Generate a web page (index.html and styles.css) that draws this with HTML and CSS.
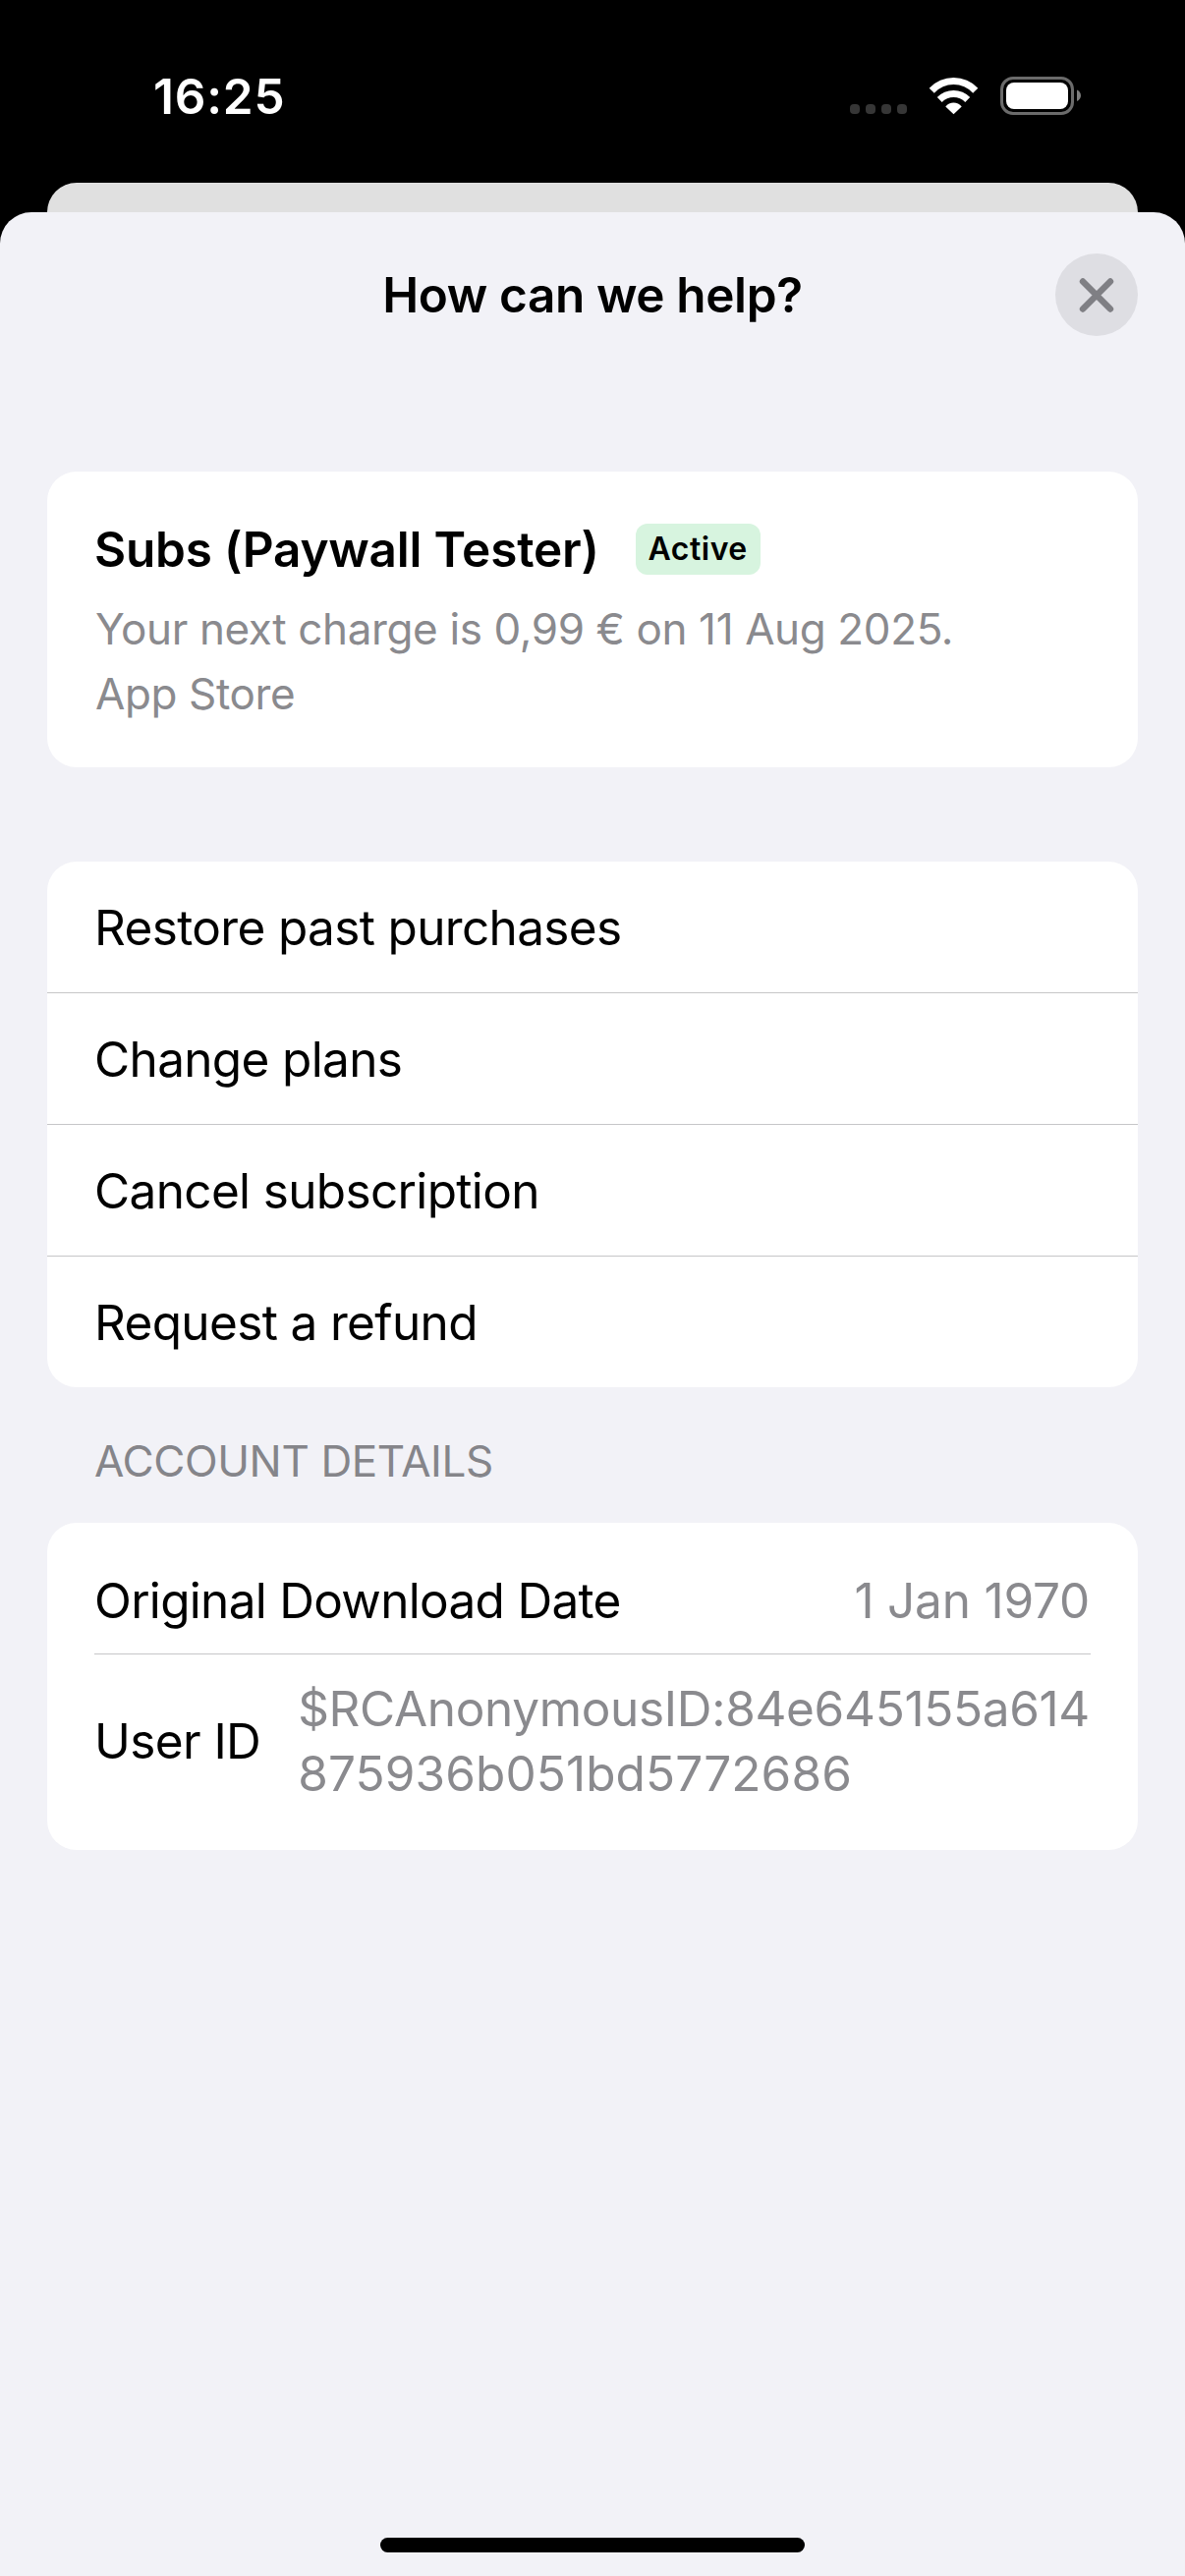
FILE: index.html
```html
<!DOCTYPE html>
<html lang="en">
<head>
<meta charset="utf-8">
<title>How can we help?</title>
<link rel="stylesheet" href="styles.css">
</head>
<body>
<div class="screen">
  <header class="status-bar">
    <div class="time">16:25</div>
    <div class="indicators">
      <div class="cellular"><i></i><i></i><i></i><i></i></div>
      <svg class="wifi" width="51" height="39" viewBox="0 0 51 39" fill="#fff">
        <path d="M.7 11.7A34.1 34.1 0 0 1 50.3 11.7L45.2 16.7A26.6 26.6 0 0 0 5.8 16.7Z"/>
        <path d="M8.8 21.1A23.2 23.2 0 0 1 42.2 21.1L37.3 26.1A16.2 16.2 0 0 0 13.7 26.1Z"/>
        <path d="M17.3 30.5A10.5 10.5 0 0 1 33.7 30.5L25.5 38.3Z"/>
      </svg>
      <svg class="battery" width="82" height="39" viewBox="0 0 82 39">
        <rect x="1.5" y="1.5" width="72" height="36" rx="11.5" fill="none" stroke="#6b6b6b" stroke-width="3"/>
        <rect x="6" y="6" width="63" height="27" rx="8" fill="#fff"/>
        <path d="M78 13.5Q82 15.5 82 19.3T78 25Z" fill="#7d7d7d"/>
      </svg>
    </div>
  </header>

  <div class="back-sheet"></div>

  <main class="sheet">
    <div class="nav">
      <h1 class="nav-title">How can we help?</h1>
      <button class="close" aria-label="Close">
        <svg width="36" height="36" viewBox="0 0 36 36" fill="none" stroke="#7f7f84" stroke-width="6.4" stroke-linecap="round"><path d="M4 4.5L32 32.5M32 4.5L4 32.5"/></svg>
      </button>
    </div>

    <section class="card subscription">
      <div class="subscription-head">
        <h2 class="product">Subs (Paywall Tester)</h2>
        <span class="badge">Active</span>
      </div>
      <p class="detail">Your next charge is 0,99 € on 11 Aug 2025.</p>
      <p class="detail">App Store</p>
    </section>

    <ul class="card actions">
      <li class="action">Restore past purchases</li>
      <li class="action">Change plans</li>
      <li class="action">Cancel subscription</li>
      <li class="action">Request a refund</li>
    </ul>

    <h3 class="section-title">ACCOUNT DETAILS</h3>

    <section class="card account">
      <div class="row">
        <span class="label label-date">Original Download Date</span>
        <span class="value value-date">1 Jan 1970</span>
      </div>
      <div class="row row-id">
        <span class="label">User ID</span>
        <span class="value value-id">$RCAnonymousID:84e645155a614<br><span class="digits">875936b051bd5772686</span></span>
      </div>
    </section>

    <div class="home-indicator"></div>
  </main>
</div>
</body>
</html>
```
FILE: styles.css
```css
* { box-sizing: border-box; margin: 0; padding: 0; }

body {
  background: #000;
  color: #000;
  font-family: Inter, "Liberation Sans", sans-serif;
  font-size: 49.5px;
  line-height: 66px;
  white-space: nowrap;
}

.screen {
  display: flex;
  flex-direction: column;
  width: 1206px;
  height: 2622px;
  overflow: hidden;
}

/* Status bar */
.status-bar {
  display: flex;
  justify-content: space-between;
  align-items: flex-start;
  height: 186px;
  padding: 78px 106px 0 156px;
  color: #fff;
}
.time { font-weight: 600; line-height: 40px; letter-spacing: .8px; }
.indicators { display: flex; align-items: flex-end; gap: 22px; }
.indicators svg { display: block; }
.cellular { display: flex; gap: 6px; padding-bottom: 1px; }
.cellular i { width: 10px; height: 10px; border-radius: 4px; background: #363636; }

/* Sheets */
.back-sheet {
  height: 30px;
  margin: 0 48px;
  border-radius: 30px 30px 0 0;
  background: #e0e0e0;
}
.sheet {
  display: flex;
  flex-direction: column;
  flex: 1;
  padding: 0 48px 24px;
  border-radius: 32px 32px 0 0;
  background: #f2f2f7;
}
.nav {
  display: grid;
  grid-template-columns: 84px 1fr 84px;
  align-items: center;
  margin-top: 42px;
  height: 84px;
}
.nav-title {
  grid-column: 2;
  font-size: inherit;
  font-weight: 600;
  letter-spacing: -.4px;
  text-align: center;
}
.close {
  display: grid;
  place-items: center;
  width: 84px;
  height: 84px;
  border: 0;
  border-radius: 50%;
  background: #dedee3;
}

.card { border-radius: 30px; background: #fff; }

/* Subscription */
.subscription { height: 301px; margin-top: 138px; padding: 49px 48px 0; }
.subscription-head { display: flex; align-items: center; gap: 37px; height: 60px; margin-bottom: 18px; }
.product { font-size: inherit; font-weight: 600; letter-spacing: -.22px; }
.badge {
  width: 127px;
  height: 52px;
  border-radius: 12px;
  background: #d7f4df;
  font-size: 32px;
  font-weight: 600;
  line-height: 52px;
  letter-spacing: .5px;
  text-align: center;
}
.detail { padding-left: 1px; color: #8a8a8e; font-size: 44px; letter-spacing: -.38px; }

/* Actions */
.actions { margin-top: 96px; list-style: none; }
.action { height: 133px; padding: 1px 48px 0; line-height: 133px; letter-spacing: -.65px; }
.action + .action { height: 134px; border-top: 1px solid #c6c6c8; }

/* Account */
.section-title {
  height: 138px;
  padding: 42px 48px 0;
  color: #85858a;
  font-size: 44px;
  font-weight: 400;
  letter-spacing: -.38px;
}
.account { height: 333px; padding: 46px 48px 0; }
.row { display: flex; justify-content: space-between; align-items: center; padding-bottom: 21px; }
.row-id { padding: 22px 0 0; border-top: 1px solid #c6c6c8; }
.label { letter-spacing: -.6px; }
.label-date { letter-spacing: -.7px; }
.value { padding-right: 1px; color: #8a8a8e; letter-spacing: -.33px; }
.value-date { letter-spacing: -.2px; }
.digits { letter-spacing: .1px; }

.home-indicator {
  width: 432px;
  height: 15px;
  margin: auto auto 0;
  border-radius: 8px;
  background: #000;
}
```
